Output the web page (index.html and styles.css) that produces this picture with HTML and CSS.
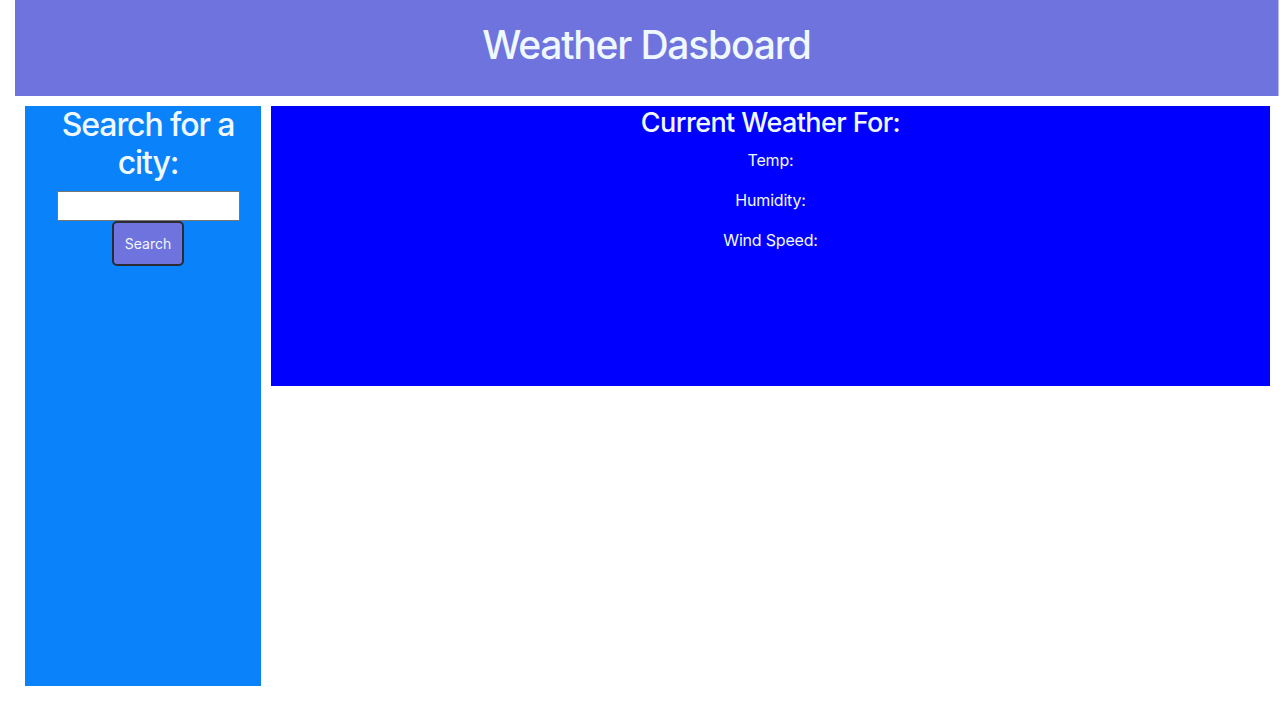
FILE: index.html
```html
<!DOCTYPE html>
<html>
<head>
<meta charset="utf-8">
<link rel="stylesheet" href="styles.css">
</head>
<body>
<header class="header">
  <h1 class="title">Weather Dasboard</h1>
</header>
<div class="row">
  <aside class="sidebar">
    <h2 class="search-title">Search for a city:</h2>
    <input class="city-input" type="text">
    <button class="search-btn">Search</button>
  </aside>
  <main class="current">
    <h3 class="current-title">Current Weather For:</h3>
    <p class="stat">Temp:</p>
    <p class="stat">Humidity:</p>
    <p class="stat">Wind Speed:</p>
  </main>
</div>
</body>
</html>
```
FILE: styles.css
```css
* { box-sizing: border-box; }
body {
  margin: 0;
  font-family: Inter, "Noto Sans", sans-serif;
  color: #f0f8ff;
  background: #fff;
}
.header {
  margin-left: 15px;
  width: 1264px;
  height: 96px;
  background: #6f73dd;
  display: flex;
  justify-content: center;
  align-items: center;
  border-right: 1px solid #b8baf0;
}
.title {
  margin: 0 0 6px 0;
  font-size: 39px;
  font-weight: 500;
  line-height: 1.2;
  letter-spacing: -1.2px;
}
.row {
  display: flex;
  gap: 10px;
  padding: 10px 10px 0 25px;
  align-items: flex-start;
}
.sidebar {
  width: 236px;
  height: 580px;
  background: #0a82f9;
  display: flex;
  flex-direction: column;
  align-items: center;
  text-align: center;
  padding-left: 10px;
}
.search-title {
  margin: 0 0 8px 0;
  font-size: 32px;
  font-weight: 500;
  line-height: 1.2;
  letter-spacing: -1.1px;
}
.city-input {
  width: 183px;
  height: 30px;
  border: 1px solid #767676;
  background: #fff;
  margin: 0;
}
.search-btn {
  width: 72px;
  height: 45px;
  background: #6f73dd;
  color: #f0f8ff;
  border: 2px solid #2b2b33;
  border-radius: 5px;
  font-family: Inter, sans-serif;
  font-size: 14px;
  padding: 0;
}
.current {
  width: 999px;
  height: 280px;
  background: #0000ff;
  text-align: center;
}
.current-title {
  margin: 0 0 8px 0;
  font-size: 27px;
  font-weight: 500;
  line-height: 1.25;
  letter-spacing: -0.6px;
}
.stat {
  margin: 0 0 16px 0;
  font-size: 16px;
  line-height: 24px;
  letter-spacing: -0.2px;
}
```
